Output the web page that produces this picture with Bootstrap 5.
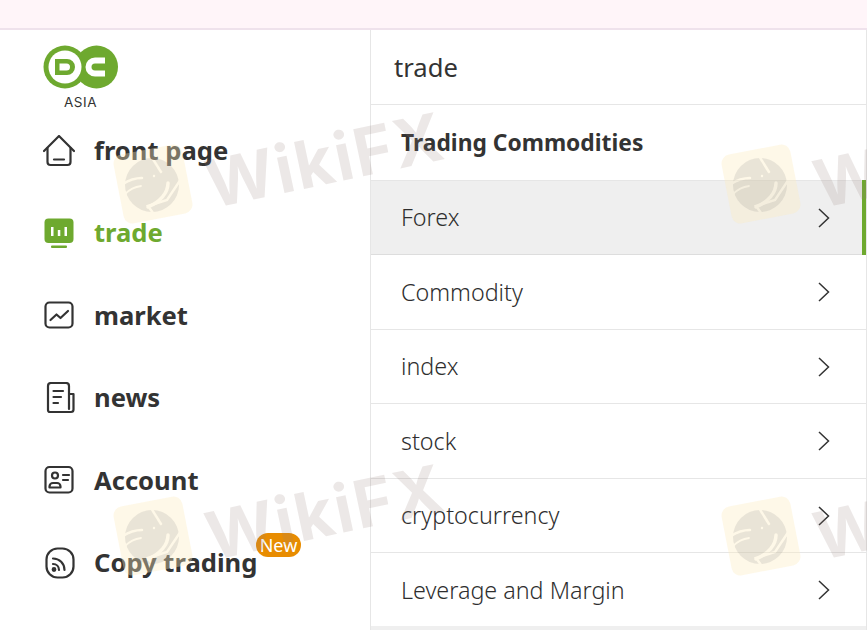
<!DOCTYPE html>
<html>
<head>
    <title>Trade Menu</title>
    <link href="https://cdn.jsdelivr.net/npm/bootstrap@5.3.0/dist/css/bootstrap.min.css" rel="stylesheet">
    <style>
        html, body { height: 630px; overflow: hidden; }
        body { font-family: "Noto Sans", "Open Sans", sans-serif; color: #333; background: #fff; position: relative; }
        .top-strip { height: 30px; background: #fff5f9; border-bottom: 2px solid #efe2ec; }
        .page-body { height: 600px; }
        .side-menu { width: 370px; flex: none; }
        .logo-box { width: 76px; margin: 15px 0 0 43px; height: 64.5px; }
        .logo-text { font-size: 13.5px; line-height: 16px; letter-spacing: .5px; text-align: center; margin-top: 5px; font-family: "Inter", sans-serif; margin-left: -1px; }
        .menu-line { height: 82.5px; padding-left: 43px; gap: 19px; font-size: 25.6px; font-weight: 700; line-height: 1; }
        .menu-line svg { width: 32px; height: 32px; flex: none; }
        .menu-line.is-on { color: #6ea92f; }
        .new-tag { position: absolute; left: 256px; top: 533px; width: 45px; height: 24px; border-radius: 12px; background: #e88c00; color: #fff; font-size: 18px; font-weight: 400; line-height: 24px; text-align: center; }
        .sub-panel { width: 497px; border-left: 1px solid #e6e6e6; border-right: 1px solid #e6e6e6; height: 600px; }
        .sub-title { height: 75px; font-size: 25.6px; line-height: 1; padding: 2px 0 0 23px; border-bottom: 1px solid #e6e6e6; }
        .sub-head { height: 75.7px; font-size: 22.8px; font-weight: 700; padding: 1px 0 0 30px; border-bottom: 1px solid #e6e6e6; }
        .sub-line { height: 74.5px; font-size: 23.3px; font-weight: 300; color: #2e2e2e; padding: 1px 35px 0 30px; border-bottom: 1px solid #e6e6e6; }
        .sub-line svg { width: 14px; height: 22px; }
        .sub-line.is-on { background: #efefef; border-bottom-color: #ddd; position: relative; }
        .sub-line.is-on::after { content: ""; position: absolute; right: 0; top: -1px; bottom: -1px; width: 4px; background: #6ea92f; }
        .sub-end { height: 6px; margin-top: -2px; background: #efefef; position: relative; }
        .wm-layer { position: absolute; inset: 0; overflow: hidden; pointer-events: none; }
        .wm-item { position: absolute; width: 340px; height: 90px; }
        .wm-a { left: 112px; top: 143px; }
        .wm-b { left: 720px; top: 143px; }
        .wm-c { left: 112px; top: 495px; }
        .wm-d { left: 720px; top: 495px; }
        .wm-tile { position: absolute; left: 0; top: 0; width: 82px; height: 82px; }
        .wm-word { position: absolute; left: 104px; top: -4px; font-family: "Inter", "Noto Sans", sans-serif; font-weight: 700; font-size: 66px; line-height: 90px; letter-spacing: 2px; color: rgba(150, 125, 120, .18); transform: rotate(-12deg); transform-origin: left bottom; white-space: nowrap; }
    </style>
</head>
<body>
    <svg width="0" height="0" class="position-absolute">
        <defs>
            <mask id="eagleCuts" maskUnits="userSpaceOnUse" x="0" y="0" width="82" height="82">
                <rect width="82" height="82" fill="#fff"/>
                <g fill="none" stroke="#000" stroke-width="2.5" stroke-linecap="round">
                    <path d="M39 13l10 16"/>
                    <path d="M69 36L55 57l-19 6 5 7"/>
                    <path d="M11 41c6-4 12-6 19-6"/>
                    <path d="M13 51c4-4 9-7 16-8" stroke-width="1.800"/>
                    <path d="M56 40c0 10-8 19-20 24" stroke-width="3.500"/>
                </g>
                <circle cx="42" cy="33" r="1.200" fill="#000"/>
            </mask>
        </defs>
        <symbol id="tile" viewBox="0 0 82 82">
            <rect x="6" y="6" width="70" height="70" rx="9" transform="rotate(-11 41 41)" fill="#fcecc0" fill-opacity=".36"/>
            <circle cx="40" cy="42" r="27" fill="#808080" fill-opacity=".17" mask="url(#eagleCuts)"/>
        </symbol>
    </svg>

    <div class="top-strip"></div>
    <div class="page-body d-flex">
        <div class="side-menu">
            <div class="logo-box">
                <svg width="76" height="44" viewBox="0 0 76 44" class="d-block">
                    <circle cx="53.500" cy="22" r="21.500" fill="#6ea92f"/>
                    <circle cx="22" cy="22" r="21.500" fill="#6ea92f"/>
                    <circle cx="22" cy="22" r="16.500" fill="#fff"/>
                    <path d="M12 14h12a8 8 0 0 1 8 8 8 8 0 0 1-8 8H12z M16.500 18.500v7h7a3.500 3.500 0 0 0 0-7z" fill="#6ea92f" fill-rule="evenodd"/>
                    <path d="M62 12.500H52a9.500 9.500 0 0 0 0 19h10v-6H52a3 3 0 0 1 0-7h10z" fill="#fff"/>
                </svg>
                <div class="logo-text">ASIA</div>
            </div>
            <div class="menu-line d-flex align-items-center">
                <svg viewBox="0 0 32 32" fill="none" stroke="#333" stroke-width="2.2" stroke-linecap="round" stroke-linejoin="round"><path d="M1 16 16 1l15 15"/><path d="M4.500 13v14a3 3 0 0 0 3 3h17a3 3 0 0 0 3-3V13"/><path d="M11 24.500h10"/></svg>
                <span>front page</span>
            </div>
            <div class="menu-line d-flex align-items-center is-on">
                <svg viewBox="0 0 32 32"><rect x="1.500" y="1.500" width="29" height="24.500" rx="4" fill="#6ea92f"/><rect x="8" y="10" width="2.500" height="9" fill="#fff"/><rect x="14.800" y="13" width="2.500" height="6" fill="#fff"/><rect x="21.500" y="10" width="2.500" height="9" fill="#fff"/><rect x="8" y="28.500" width="16" height="2.500" rx="1" fill="#6ea92f"/></svg>
                <span>trade</span>
            </div>
            <div class="menu-line d-flex align-items-center">
                <svg viewBox="0 0 32 32" fill="none" stroke="#333" stroke-width="2.2" stroke-linecap="round" stroke-linejoin="round"><rect x="2.500" y="2.500" width="27" height="25" rx="4"/><path d="M7.500 20l6-5.500 4 3.500 7.500-7"/></svg>
                <span>market</span>
            </div>
            <div class="menu-line d-flex align-items-center">
                <svg viewBox="0 0 32 32" fill="none" stroke="#333" stroke-width="2.2" stroke-linecap="round" stroke-linejoin="round"><path d="M26 27V4a3 3 0 0 0-3-3H8a3 3 0 0 0-3 3v24a2 2 0 0 0 2 2h21a2.500 2.500 0 0 0 2.500-2.500V12H26"/><path d="M10.500 9H20M10.500 15H18M10.500 21H15"/></svg>
                <span>news</span>
            </div>
            <div class="menu-line d-flex align-items-center">
                <svg viewBox="0 0 32 32" fill="none" stroke="#333" stroke-width="2.2" stroke-linecap="round" stroke-linejoin="round"><rect x="2.500" y="2" width="27" height="25.500" rx="4"/><circle cx="12" cy="10.500" r="3"/><path d="M6.500 22.500v-1a3.500 3.500 0 0 1 3.500-3.500h4a3.500 3.500 0 0 1 3.500 3.500v1z"/><path d="M20 10h6M20 15h5"/></svg>
                <span>Account</span>
            </div>
            <div class="menu-line d-flex align-items-center">
                <svg viewBox="0 0 32 32" fill="none" stroke="#333" stroke-width="2.2" stroke-linecap="round" stroke-linejoin="round"><rect x="3.500" y="1.500" width="27" height="29" rx="11"/><path d="M10 11.500c6.500 0 11.500 5 11.500 11.500"/><path d="M10 17c3.500 0 6 2.500 6 6"/><circle cx="11" cy="22.500" r="1.300" fill="#333"/></svg>
                <span>Copy trading</span>
            </div>
            <span class="new-tag">New</span>
        </div>
        <div class="sub-panel">
            <div class="sub-title d-flex align-items-center">trade</div>
            <div class="sub-head d-flex align-items-center">Trading Commodities</div>
            <div class="sub-line d-flex align-items-center justify-content-between is-on"><span>Forex</span><svg viewBox="0 0 14 22" fill="none" stroke="#333" stroke-width="1.500"><path d="M2 2l9.500 9L2 20"/></svg></div>
            <div class="sub-line d-flex align-items-center justify-content-between"><span>Commodity</span><svg viewBox="0 0 14 22" fill="none" stroke="#333" stroke-width="1.500"><path d="M2 2l9.500 9L2 20"/></svg></div>
            <div class="sub-line d-flex align-items-center justify-content-between"><span>index</span><svg viewBox="0 0 14 22" fill="none" stroke="#333" stroke-width="1.500"><path d="M2 2l9.500 9L2 20"/></svg></div>
            <div class="sub-line d-flex align-items-center justify-content-between"><span>stock</span><svg viewBox="0 0 14 22" fill="none" stroke="#333" stroke-width="1.500"><path d="M2 2l9.500 9L2 20"/></svg></div>
            <div class="sub-line d-flex align-items-center justify-content-between"><span>cryptocurrency</span><svg viewBox="0 0 14 22" fill="none" stroke="#333" stroke-width="1.500"><path d="M2 2l9.500 9L2 20"/></svg></div>
            <div class="sub-line d-flex align-items-center justify-content-between"><span>Leverage and Margin</span><svg viewBox="0 0 14 22" fill="none" stroke="#333" stroke-width="1.500"><path d="M2 2l9.500 9L2 20"/></svg></div>
            <div class="sub-end"></div>
        </div>
    </div>

    <!-- watermark lies over everything -->
    <div class="wm-layer">
        <div class="wm-item wm-a"><svg class="wm-tile"><use href="#tile"/></svg><div class="wm-word">WikiFX</div></div>
        <div class="wm-item wm-b"><svg class="wm-tile"><use href="#tile"/></svg><div class="wm-word">WikiFX</div></div>
        <div class="wm-item wm-c"><svg class="wm-tile"><use href="#tile"/></svg><div class="wm-word">WikiFX</div></div>
        <div class="wm-item wm-d"><svg class="wm-tile"><use href="#tile"/></svg><div class="wm-word">WikiFX</div></div>
    </div>
</body>
</html>
